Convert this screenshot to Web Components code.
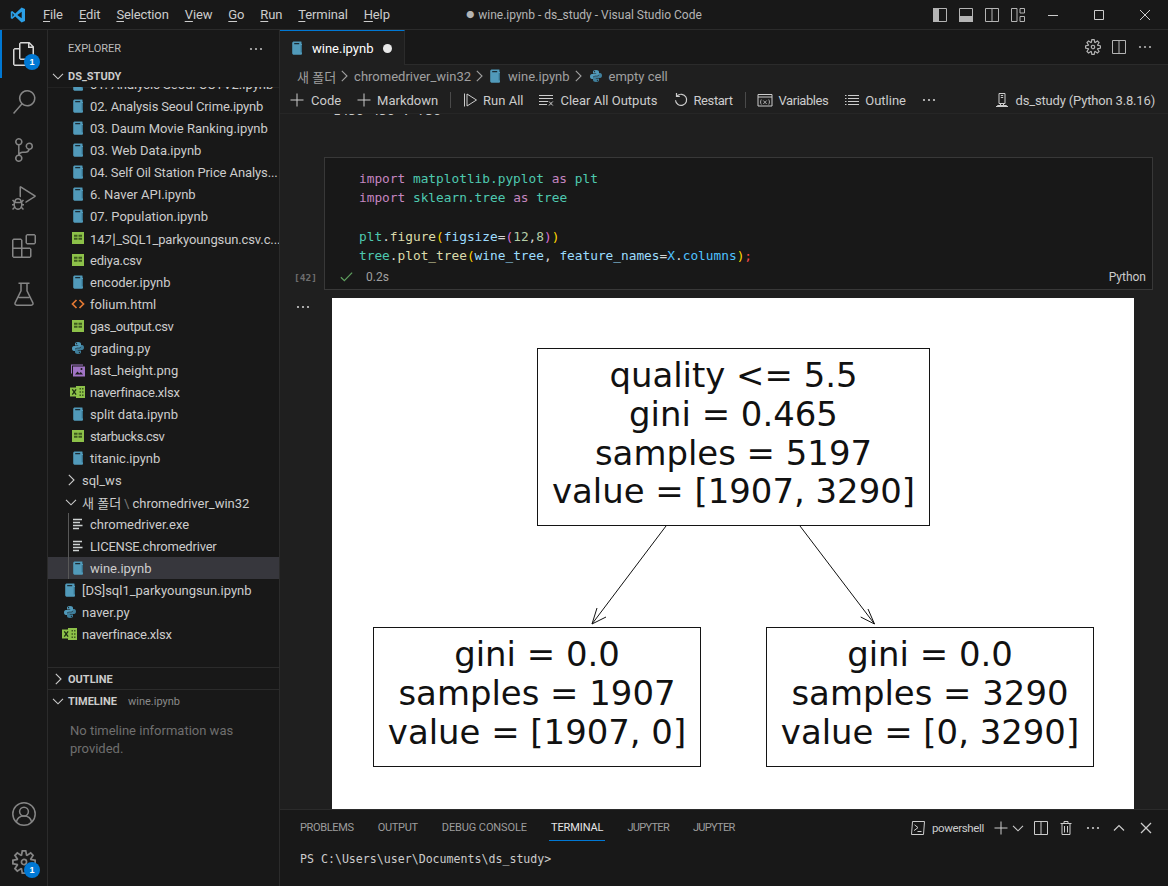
<!DOCTYPE html>
<html lang="en">
<head>
<meta charset="utf-8">
<title>wine.ipynb - ds_study - Visual Studio Code</title>
<style>
  html, body { margin: 0; padding: 0; background: #181818; }
  body { font-family: Roboto, "Noto Sans CJK KR", sans-serif; color: #ccc; }
</style>
</head>
<body>
<vs-window>
  <title-bar slot="top"></title-bar>
  <activity-bar slot="activity"></activity-bar>
  <side-bar slot="side"></side-bar>
  <editor-group slot="main"></editor-group>
</vs-window>

<script>
const MONO = '"DejaVu Sans Mono", "Liberation Mono", monospace';

const ICONS = {
  // activity bar, 24 box
  files: [24, '<path fill="currentColor" d="M17.5 0h-9L7 1.5V6H2.5L1 7.5v15.07L2.5 24h12.07L16 22.57V18h4.7l1.3-1.43V4.5L17.5 0zm0 2.12l2.38 2.38H17.5V2.12zm-3 20.38h-12v-15H7v9.07L8.5 18h6v4.5zm6-6h-12v-15H16V6h4.5v10.5z"/>'],
  search: [24, '<path fill="currentColor" d="M15.25 0a8.25 8.25 0 0 0-6.18 13.72L1 22.88l1.12 1 8.05-9.12A8.251 8.251 0 1 0 15.25.01V0zm0 15a6.75 6.75 0 1 1 0-13.5 6.75 6.75 0 0 1 0 13.5z"/>'],
  scm: [24, '<path fill="currentColor" d="M21.007 8.222A3.738 3.738 0 0 0 15.045 5.2a3.737 3.737 0 0 0 1.156 6.583 2.988 2.988 0 0 1-2.668 1.67h-2.99a4.456 4.456 0 0 0-2.989 1.165V7.4a3.737 3.737 0 1 0-1.494 0v9.117a3.776 3.776 0 1 0 1.816.099 2.99 2.99 0 0 1 2.668-1.667h2.99a4.484 4.484 0 0 0 4.223-3.039 3.736 3.736 0 0 0 3.25-3.687zM4.565 3.738a2.242 2.242 0 1 1 4.484 0 2.242 2.242 0 0 1-4.484 0zm4.484 16.441a2.242 2.242 0 1 1-4.484 0 2.242 2.242 0 0 1 4.484 0zm8.221-9.715a2.242 2.242 0 1 1 0-4.485 2.242 2.242 0 0 1 0 4.485z"/>'],
  debug: [24, '<path fill="currentColor" d="M10.94 13.5l-1.32 1.32a3.73 3.73 0 0 0-7.24 0L1.06 13.5 0 14.56l1.72 1.72-.22.22V18H0v1.5h1.5v.08c.077.489.214.966.41 1.42L0 22.94 1.06 24l1.65-1.65A4.308 4.308 0 0 0 6 24a4.31 4.31 0 0 0 3.29-1.65L10.94 24 12 22.94 10.09 21c.198-.464.336-.951.41-1.45v-.1H12V18h-1.5v-1.5l-.22-.22L12 14.56l-1.06-1.06zM6 13.5a2.25 2.25 0 0 1 2.25 2.25h-4.5A2.25 2.25 0 0 1 6 13.5zm3 6a3.33 3.33 0 0 1-3 3 3.33 3.33 0 0 1-3-3v-2.25h6v2.25zm14.76-9.9v1.26L13.5 17.37v-1.77l8.5-5.37L9 2v9.46a5.07 5.07 0 0 0-1.5-.72V.63L8.64 0l15.12 9.6z"/>'],
  extensions: [24, '<path fill="currentColor" d="M13.5 1.5L15 0h7.5L24 1.5V9l-1.5 1.5H15L13.5 9V1.5zm1.5 0V9h7.5V1.5H15zM0 15V6l1.5-1.5H9L10.5 6v7.5H18l1.5 1.5v7.5L18 24H1.5L0 22.5V15zm9-1.5V6H1.5v7.5H9zM9 15H1.5v7.5H9V15zm1.5 7.5H18V15h-7.5v7.5z"/>'],
  beaker: [24, '<path fill="none" stroke="currentColor" stroke-width="1.5" d="M6.5 1.2h11M9 1.2v7.6L3.2 20.6c-.7 1.5.1 2.6 1.6 2.6h14.4c1.5 0 2.3-1.1 1.6-2.6L15 8.8V1.2M6.6 15.5h10.8"/>'],
  account: [24, '<g fill="none" stroke="currentColor" stroke-width="1.5"><circle cx="12" cy="12" r="11.2"/><circle cx="12" cy="9.6" r="4.4"/><path d="M4.4 20.2c.6-3.7 3.6-6.2 7.6-6.2s7 2.5 7.6 6.2"/></g>'],
  gear: [24, '<path fill="currentColor" d="M19.85 8.75l4.15.83v4.84l-4.15.83 2.35 3.52-3.43 3.43-3.52-2.35-.83 4.15H9.58l-.83-4.15-3.52 2.35-3.43-3.43 2.35-3.52L0 14.42V9.58l4.15-.83L1.8 5.23 5.23 1.8l3.52 2.35L9.58 0h4.84l.83 4.15 3.52-2.35 3.43 3.43-2.35 3.52zm-1.57 5.07l4-.81v-2l-4-.81-.54-1.3 2.29-3.43-1.43-1.43-3.43 2.29-1.3-.54-.81-4h-2l-.81 4-1.3.54-3.43-2.29-1.43 1.43L6.38 8.9l-.54 1.3-4 .81v2l4 .81.54 1.3-2.29 3.43 1.43 1.43 3.43-2.29 1.3.54.81 4h2l.81-4 1.3-.54 3.43 2.29 1.43-1.43-2.29-3.43.54-1.3zm-8.186-4.672A3.43 3.43 0 0 1 12 8.57 3.44 3.44 0 0 1 15.43 12a3.43 3.43 0 1 1-5.336-2.852zm.956 4.274c.281.188.612.288.95.288A1.7 1.7 0 0 0 13.71 12a1.71 1.71 0 1 0-2.66 1.422z"/>'],
  // logo
  logo: [16, '<path fill="#2b9fe6" fill-rule="evenodd" d="M11.6.4L5.3 6.4 2.2 4.1.8 4.8v6.4l1.4.7 3.1-2.3 6.3 6 3.4-1.5V1.9L11.6.4zM11.7 4.7v6.6L7.3 8l4.4-3.3zM2.4 6.1L4.1 8 2.4 9.9V6.1z"/>'],
  // ui, 16 box
  plus: [16, '<path fill="none" stroke="currentColor" d="M8 1.5v13M1.5 8h13"/>'],
  chevronRight: [16, '<path fill="none" stroke="currentColor" stroke-width="1.1" d="M5.8 2.8L11 8l-5.2 5.2"/>'],
  chevronDown: [16, '<path fill="none" stroke="currentColor" stroke-width="1.1" d="M3 5.8l5 5 5-5"/>'],
  chevronUp: [16, '<path fill="none" stroke="currentColor" stroke-width="1.2" d="M3 10.5l5-5 5 5"/>'],
  ellipsis: [16, '<g fill="currentColor"><circle cx="3" cy="8" r="1.1"/><circle cx="8" cy="8" r="1.1"/><circle cx="13" cy="8" r="1.1"/></g>'],
  runAll: [16, '<path fill="none" stroke="currentColor" d="M2.5 1.5v13M5 2l9.5 6L5 14V2z"/>'],
  clearAll: [16, '<path fill="none" stroke="currentColor" d="M1 3.5h14M1 6.5h14M1 9.5h9M1 12.5h8M11 9.5l3.8 4M14.8 9.5l-3.8 4"/>'],
  restart: [16, '<path fill="none" stroke="currentColor" stroke-width="1.2" d="M4.2 3.8A5.6 5.6 0 1 1 2.5 8.3"/><path fill="none" stroke="currentColor" stroke-width="1.2" d="M3.5 1v3.3h3.3"/>'],
  variables: [16, '<path fill="none" stroke="currentColor" d="M1 2.5h14V14H1zM1 5h14"/><path fill="none" stroke="currentColor" stroke-width=".8" d="M4.3 7.5c-1 1.5-1 3.5 0 5M11.700 7.5c1 1.5 1 3.5 0 5M6.3 8.5l3.4 3.5M9.7 8.5L6.3 12"/>'],
  outline: [16, '<path fill="none" stroke="currentColor" d="M4 3.500h11M4 6.500h11M4 9.500h11M4 12.500h11M1 3.500h1.500M1 6.500h1.500M1 9.500h1.500M1 12.500h1.500"/>'],
  kernel: [16, '<path fill="none" stroke="currentColor" d="M5 1.500h6v10H5zM6.800 3.500h2.400M6.800 5.500h2.400M6.500 11.500v2M9.500 11.500v2M2 14.500h12M3.500 14.500v-1h9v1"/>'],
  split: [16, '<path fill="none" stroke="currentColor" d="M1.500 1.500h13v13h-13zM8 1.500v13"/>'],
  layoutLeft: [16, '<path fill="currentColor" d="M1 1h6v14H1z"/><path fill="none" stroke="currentColor" d="M1.500 1.500h13v13h-13z"/>'],
  layoutPanel: [16, '<path fill="currentColor" d="M1 9h14v6H1z"/><path fill="none" stroke="currentColor" d="M1.500 1.500h13v13h-13z"/>'],
  layoutCustom: [16, '<path fill="none" stroke="currentColor" d="M1.500 1.500H7v13H1.500zM10 1.500h4.500V6H10zM10 9.500h4.500v5H10z"/>'],
  minimize: [16, '<path fill="none" stroke="currentColor" d="M3 8.500h10"/>'],
  maximize: [16, '<path fill="none" stroke="currentColor" d="M3.500 3.500h9v9h-9z"/>'],
  close: [16, '<path fill="none" stroke="currentColor" d="M3 3l10 10M13 3L3 13"/>'],
  closeBold: [16, '<path fill="none" stroke="currentColor" stroke-width="1.3" d="M3 3l10 10M13 3L3 13"/>'],
  trash: [16, '<path fill="none" stroke="currentColor" d="M2.500 3.500h11M6 3.500V1.500h4v2M4 3.500v11h8v-11M6.500 6v6.500M9.500 6v6.500"/>'],
  terminal: [16, '<path fill="none" stroke="currentColor" d="M2.500 1.500h12l-1 13h-12z"/><path fill="none" stroke="currentColor" d="M4.500 4.800L8 7.600l-4 3M7.500 11.500h4"/>'],
  check: [16, '<path fill="none" stroke="#5f9f5f" stroke-width="1.3" d="M2 8.800l3.700 3.700L14 3.800"/>'],
  // file icons
  notebook: [16, '<path fill="#519aba" d="M5 1.500h6.500c1 0 1.500.6 1.500 1.500v10.300c0 1-.5 1.500-1.500 1.500H5c-1 0-1.800-.6-1.800-1.500V3c0-.9.8-1.500 1.800-1.500z"/><path fill="#1b2d36" d="M5.200 3h5v1.300h-5zM12 2.500h1v1h-1z"/><path fill="#35708a" d="M11.700 5H13v7.500h-1.300z"/>'],
  csv: [16, '<path fill="#8dc149" d="M2 2h12v12H2z"/><path fill="#3d5a1e" d="M4 4.800h3.500v2H4zM8.500 4.800H12v2H8.500zM4 7.800h3.500v2H4zM8.500 7.800H12v2H8.500z"/>'],
  html: [16, '<path fill="none" stroke="#e37933" stroke-width="1.7" d="M6.500 4L2.500 8l4 4M9.500 4l4 4-4 4"/>'],
  python: [16, '<path fill="#519aba" d="M8 2C5.800 2 5 2.900 5 4v1.500h3.200V6H3.900C2.700 6 2 7 2 8.500S2.700 11 3.900 11H5V9.600C5 8.500 5.900 7.700 7 7.700h2.300c.9 0 1.700-.8 1.700-1.700V4c0-1.100-1-2-3-2zM6.600 3.100a.6.600 0 1 1 0 1.200.6.600 0 0 1 0-1.200z"/><path fill="#3f7f9c" d="M8 14c2.200 0 3-.9 3-2v-1.500H7.800V10h4.300c1.200 0 1.900-1 1.900-2.500S13.300 5 12.100 5H11v1.400c0 1.100-.9 1.900-2 1.900H6.700C5.800 8.300 5 9.100 5 10v2c0 1.100 1 2 3 2zm1.400-1.100a.6.600 0 1 1 0-1.200.6.600 0 0 1 0 1.200z"/>'],
  image: [16, '<path fill="#a074c4" d="M1 2.500h12v1H2v8H1z"/><path fill="#a074c4" d="M3 4.500h12v10H3z"/><path fill="#1b1b1b" d="M5 12.500l2.500-3 1.800 2 1.500-1.500 2.200 2.500z"/><circle cx="11.500" cy="7" r="1" fill="#1b1b1b"/>'],
  xlsx: [16, '<path fill="#8dc149" d="M6 2h9v12H6z"/><path fill="#3d5a1e" d="M9.500 4H11v1.500H9.500zM12 4h1.500v1.500H12zM9.500 7.300H11v1.500H9.500zM12 7.300h1.500v1.500H12zM9.500 10.500H11V12H9.500zM12 10.500h1.500V12H12z"/><path fill="#8dc149" d="M0 3.500h8.500v9H0z"/><path fill="none" stroke="#1b2d12" stroke-width="1.3" d="M2.300 5.300l3.800 5.400M6.100 5.300l-3.800 5.400"/>'],
  lines: [16, '<path fill="none" stroke="#cfd3d3" stroke-width="1.3" d="M3 3.500h9M3 6.500h7M3 9.500h9.500M3 12.500h6"/>']
};

class VIcon extends HTMLElement {
  connectedCallback() {
    const [box, body] = ICONS[this.getAttribute('name')];
    const size = this.getAttribute('size') || 16;
    this.attachShadow({ mode: 'open' });
    this.shadowRoot.innerHTML = `
      <style>
        :host { display: inline-flex; flex: none; width: ${size}px; height: ${size}px; }
        svg { display: block; width: 100%; height: 100%; }
      </style>
      <svg viewBox="0 0 ${box} ${box}" aria-hidden="true">${body}</svg>`;
  }
}
customElements.define('v-icon', VIcon);

class VsWindow extends HTMLElement {
  connectedCallback() {
    this.attachShadow({ mode: 'open' });
    this.shadowRoot.innerHTML = `
      <style>
        :host {
          display: grid;
          width: 1168px;
          height: 886px;
          overflow: hidden;
          background: #181818;
          grid-template-columns: 48px 232px 1fr;
          grid-template-rows: 30px 1fr;
          font: 13px Roboto, "Noto Sans CJK KR", sans-serif;
          color: #ccc;
        }
        .top { grid-column: 1 / -1; display: grid; min-width: 0; }
        .col { display: grid; min-width: 0; min-height: 0; }
      </style>
      <div class="top"><slot name="top"></slot></div>
      <div class="col"><slot name="activity"></slot></div>
      <div class="col"><slot name="side"></slot></div>
      <div class="col"><slot name="main"></slot></div>`;
  }
}
customElements.define('vs-window', VsWindow);

class TitleBar extends HTMLElement {
  connectedCallback() {
    const menus = ['File', 'Edit', 'Selection', 'View', 'Go', 'Run', 'Terminal', 'Help'];
    this.attachShadow({ mode: 'open' });
    this.shadowRoot.innerHTML = `
      <style>
        :host {
          display: grid;
          grid-template-columns: 1fr auto 1fr;
          align-items: center;
          height: 30px;
          box-sizing: border-box;
          border-bottom: 1px solid #2b2b2b;
          background: #181818;
        }
        .left { display: flex; align-items: center; padding-left: 10px; }
        .menus { display: flex; gap: 16px; margin-left: 17px; color: #ccc; letter-spacing: -.13px; }
        u { text-underline-offset: 2px; }
        .title { font-size: 12px; color: #b4b4b4; }
        .title small { font-size: 8px; margin-right: 4px; vertical-align: 1px; }
        .right { display: flex; justify-content: flex-end; align-items: center; color: #b4b4b4; }
        .layout { display: flex; gap: 10px; margin-right: 4px; }
        .win { width: 46px; display: flex; justify-content: center; color: #ccc; }
      </style>
      <div class="left">
        <v-icon name="logo"></v-icon>
        <div class="menus">${menus.map(m => `<span><u>${m[0]}</u>${m.slice(1)}</span>`).join('')}</div>
      </div>
      <div class="title"><small>●</small>wine.ipynb - ds_study - Visual Studio Code</div>
      <div class="right">
        <div class="layout">
          <v-icon name="layoutLeft"></v-icon>
          <v-icon name="layoutPanel"></v-icon>
          <v-icon name="split"></v-icon>
          <v-icon name="layoutCustom"></v-icon>
        </div>
        <div class="win"><v-icon name="minimize"></v-icon></div>
        <div class="win"><v-icon name="maximize"></v-icon></div>
        <div class="win"><v-icon name="close"></v-icon></div>
      </div>`;
  }
}
customElements.define('title-bar', TitleBar);

class ActivityItem extends HTMLElement {
  connectedCallback() {
    const active = this.hasAttribute('active');
    const badge = this.getAttribute('badge');
    this.attachShadow({ mode: 'open' });
    this.shadowRoot.innerHTML = `
      <style>
        :host {
          display: flex;
          position: relative;
          align-items: center;
          justify-content: center;
          width: 47px;
          height: 48px;
          color: ${active ? '#d7d7d7' : '#858585'};
          box-sizing: border-box;
          ${active ? 'border-left: 2px solid #0078d4; padding-right: 2px;' : ''}
        }
        .badge {
          position: absolute;
          left: ${active ? 22 : 24}px;
          top: 24px;
          width: 16px;
          height: 16px;
          border-radius: 50%;
          background: #0078d4;
          color: #fff;
          font: 700 9px/16px "Liberation Sans", sans-serif;
          text-align: center;
        }
      </style>
      <v-icon name="${this.getAttribute('icon')}" size="24"></v-icon>
      ${badge ? `<span class="badge">${badge}</span>` : ''}`;
  }
}
customElements.define('activity-item', ActivityItem);

class ActivityBar extends HTMLElement {
  connectedCallback() {
    this.attachShadow({ mode: 'open' });
    this.shadowRoot.innerHTML = `
      <style>
        :host {
          display: flex;
          flex-direction: column;
          justify-content: space-between;
          width: 48px;
          box-sizing: border-box;
          border-right: 1px solid #2b2b2b;
          background: #181818;
        }
      </style>
      <div>
        <activity-item icon="files" badge="1" active></activity-item>
        <activity-item icon="search"></activity-item>
        <activity-item icon="scm"></activity-item>
        <activity-item icon="debug"></activity-item>
        <activity-item icon="extensions"></activity-item>
        <activity-item icon="beaker"></activity-item>
      </div>
      <div>
        <activity-item icon="account"></activity-item>
        <activity-item icon="gear" badge="1"></activity-item>
      </div>`;
  }
}
customElements.define('activity-bar', ActivityBar);

class FileRow extends HTMLElement {
  connectedCallback() {
    const depth = +(this.getAttribute('depth') || 1);
    const icon = this.getAttribute('icon');
    const selected = this.hasAttribute('selected');
    const guide = this.hasAttribute('guide');
    this.attachShadow({ mode: 'open' });
    this.shadowRoot.innerHTML = `
      <style>
        :host {
          display: flex;
          align-items: center;
          position: relative;
          height: 22px;
          padding-left: ${14 + (depth - 1) * 8}px;
          white-space: nowrap;
          overflow: hidden;
          color: #ccc;
          font-size: 13px;
          ${selected ? 'background: #37373d;' : ''}
        }
        .txt { margin-left: 4px; }
        .folder { margin-left: 1px; margin-right: -1px; color: #ccc; }
        .guide { position: absolute; left: 20px; top: 0; bottom: 0; width: 1px; background: #585858; }
      </style>
      ${guide ? '<span class="guide"></span>' : ''}
      <v-icon name="${icon}" ${icon.startsWith('chevron') ? 'class="folder"' : ''}></v-icon>
      <span class="txt"><slot></slot></span>`;
  }
}
customElements.define('file-row', FileRow);

class PaneHeader extends HTMLElement {
  connectedCallback() {
    const open = this.hasAttribute('open');
    const line = this.hasAttribute('line');
    this.attachShadow({ mode: 'open' });
    this.shadowRoot.innerHTML = `
      <style>
        :host {
          display: flex;
          align-items: center;
          height: 22px;
          box-sizing: border-box;
          padding-left: 2px;
          font-size: 11px;
          font-weight: 700;
          color: #ccc;
          ${line ? 'border-top: 1px solid #2b2b2b; padding-top: 1px;' : ''}
          flex: none;
        }
        v-icon { margin-left: 0; margin-right: 2px; }
        ::slotted(small) { font-size: 11px; font-weight: 400; color: #8a8a8a; margin-left: 11px; }
      </style>
      <v-icon name="${open ? 'chevronDown' : 'chevronRight'}"></v-icon>
      <slot></slot>`;
  }
}
customElements.define('pane-header', PaneHeader);

class SideBar extends HTMLElement {
  connectedCallback() {
    const rows = [
      [2, 'notebook', '01. Analysis Seoul CCTV2.ipynb'],
      [2, 'notebook', '02. Analysis Seoul Crime.ipynb', -.14],
      [2, 'notebook', '03. Daum Movie Ranking.ipynb'],
      [2, 'notebook', '03. Web Data.ipynb'],
      [2, 'notebook', '04. Self Oil Station Price Analys...', -.1],
      [2, 'notebook', '6. Naver API.ipynb'],
      [2, 'notebook', '07. Population.ipynb'],
      [2, 'csv', '14기_SQL1_parkyoungsun.csv.c...', -.12],
      [2, 'csv', 'ediya.csv', -.2],
      [2, 'notebook', 'encoder.ipynb'],
      [2, 'html', 'folium.html'],
      [2, 'csv', 'gas_output.csv', -.3],
      [2, 'python', 'grading.py'],
      [2, 'image', 'last_height.png'],
      [2, 'xlsx', 'naverfinace.xlsx', -.25],
      [2, 'notebook', 'split data.ipynb'],
      [2, 'csv', 'starbucks.csv', -.45],
      [2, 'notebook', 'titanic.ipynb'],
      [1, 'chevronRight', 'sql_ws'],
      [1, 'chevronDown', '새 폴더<span style="color:#777;margin:0 3px">\\</span>chromedriver_win32'],
      [2, 'lines', 'chromedriver.exe', 0, 'guide'],
      [2, 'lines', 'LICENSE.chromedriver', -.2, 'guide'],
      [2, 'notebook', 'wine.ipynb', 0, 'guide selected'],
      [1, 'notebook', '[DS]sql1_parkyoungsun.ipynb'],
      [1, 'python', 'naver.py'],
      [1, 'xlsx', 'naverfinace.xlsx', -.25]
    ];
    this.attachShadow({ mode: 'open' });
    this.shadowRoot.innerHTML = `
      <style>
        :host {
          display: flex;
          flex-direction: column;
          width: 232px;
          box-sizing: border-box;
          border-right: 1px solid #2b2b2b;
          background: #181818;
          min-height: 0;
          overflow: hidden;
        }
        .title {
          display: flex;
          justify-content: space-between;
          align-items: center;
          height: 35px;
          flex: none;
          box-sizing: border-box;
          padding: 2px 15px 0 20px;
          font-size: 11px;
          color: #bbb;
        }
        .tree { flex: none; height: 580px; overflow: hidden; box-shadow: inset 0 1px 0 #222; }
        .rows { margin-top: -14px; }
        .empty { padding: 11px 20px 0 22px; line-height: 18px; color: #6f6f6f; }
      </style>
      <div class="title"><span>EXPLORER</span><v-icon name="ellipsis"></v-icon></div>
      <pane-header open>DS_STUDY</pane-header>
      <div class="tree"><div class="rows">
        ${rows.map(([d, i, t, ls, extra]) => `<file-row depth="${d}" icon="${i}" ${extra || ''} ${ls ? `style="letter-spacing:${ls}px"` : ''}>${t}</file-row>`).join('')}
      </div></div>
      <pane-header line>OUTLINE</pane-header>
      <pane-header open line>TIMELINE<small>wine.ipynb</small></pane-header>
      <div class="empty">No timeline information was provided.</div>`;
  }
}
customElements.define('side-bar', SideBar);

class EditorGroup extends HTMLElement {
  connectedCallback() {
    this.attachShadow({ mode: 'open' });
    this.shadowRoot.innerHTML = `
      <style>
        :host {
          display: flex;
          flex-direction: column;
          min-width: 0;
          min-height: 0;
          overflow: hidden;
          background: #1f1f1f;
        }
        .tabs {
          display: flex;
          justify-content: space-between;
          height: 35px;
          flex: none;
          box-sizing: border-box;
          background: #181818;
          border-bottom: 1px solid #2b2b2b;
        }
        .tab {
          display: flex;
          align-items: center;
          width: 125px;
          height: 35px;
          box-sizing: border-box;
          padding-left: 9px;
          background: #1f1f1f;
          border-top: 1px solid #0078d4;
          border-right: 1px solid #2b2b2b;
          color: #fff;
        }
        .tab span { margin-left: 7px; }
        .tab i { width: 9px; height: 9px; margin-left: 10px; border-radius: 50%; background: #e8e8e8; }
        .actions { display: flex; align-items: center; gap: 10px; padding-right: 15px; color: #b4b4b4; }
        .crumbs {
          display: flex;
          align-items: center;
          height: 22px;
          flex: none;
          padding-left: 17px;
          color: #a0a0a0;
          white-space: nowrap;
        }
        .crumbs .file { margin: 0 5px 0 0; }
        .crumbs .py { margin: 0 5px 0 2px; }
      </style>
      <div class="tabs">
        <div class="tab">
          <v-icon name="notebook"></v-icon><span>wine.ipynb</span><i></i>
        </div>
        <div class="actions">
          <v-icon name="gear"></v-icon>
          <v-icon name="split"></v-icon>
          <v-icon name="ellipsis"></v-icon>
        </div>
      </div>
      <div class="crumbs">
        <span>새 폴더</span>
        <v-icon name="chevronRight" style="margin-right:2px"></v-icon>
        <span>chromedriver_win32</span>
        <v-icon name="chevronRight"></v-icon>
        <v-icon name="notebook" class="file"></v-icon>
        <span>wine.ipynb</span>
        <v-icon name="chevronRight"></v-icon>
        <v-icon name="python" class="py"></v-icon>
        <span>empty cell</span>
      </div>
      <nb-toolbar></nb-toolbar>
      <nb-view></nb-view>
      <bottom-panel></bottom-panel>`;
  }
}
customElements.define('editor-group', EditorGroup);

class ToolItem extends HTMLElement {
  connectedCallback() {
    this.attachShadow({ mode: 'open' });
    this.shadowRoot.innerHTML = `
      <style>
        :host { display: inline-flex; align-items: center; gap: var(--gap, 6px); color: #ccc; white-space: nowrap; }
      </style>
      <v-icon name="${this.getAttribute('icon')}"></v-icon><slot></slot>`;
  }
}
customElements.define('tool-item', ToolItem);

class NbToolbar extends HTMLElement {
  connectedCallback() {
    this.attachShadow({ mode: 'open' });
    this.shadowRoot.innerHTML = `
      <style>
        :host {
          display: flex;
          align-items: center;
          gap: 15px;
          height: 26px;
          flex: none;
          padding: 0 13px 0 9px;
          box-sizing: border-box;
          box-shadow: 0 1px 0 #262626;
          position: relative;
          z-index: 1;
          background: #1f1f1f;
        }
        .sep { width: 1px; height: 16px; background: #4a4a4a; margin: 0 -5px 0 -3px; }
        .gap { flex: 1; }
      </style>
      <tool-item icon="plus">Code</tool-item>
      <tool-item icon="plus" style="--gap:5px">Markdown</tool-item>
      <span class="sep"></span>
      <tool-item icon="runAll" style="margin-left:1px;--gap:5px">Run All</tool-item>
      <tool-item icon="clearAll">Clear All Outputs</tool-item>
      <tool-item icon="restart" style="--gap:5px;letter-spacing:-.42px">Restart</tool-item>
      <span class="sep" style="margin-right:-4px"></span>
      <tool-item icon="variables" style="letter-spacing:-.45px">Variables</tool-item>
      <tool-item icon="outline" style="--gap:5px;margin-left:1px">Outline</tool-item>
      <v-icon name="ellipsis"></v-icon>
      <span class="gap"></span>
      <tool-item icon="kernel" style="letter-spacing:-.17px">ds_study (Python 3.8.16)</tool-item>`;
  }
}
customElements.define('nb-toolbar', NbToolbar);

class CodeCell extends HTMLElement {
  connectedCallback() {
    this.attachShadow({ mode: 'open' });
    this.shadowRoot.innerHTML = `
      <style>
        :host {
          display: flex;
          align-items: flex-end;
        }
        .count {
          width: 44px;
          flex: none;
          box-sizing: border-box;
          padding: 0 7px 5px 0;
          text-align: right;
          font: 700 9.5px/14px ${MONO};
          color: #6e6e6e;
        }
        .box {
          flex: 1;
          margin-right: 15px;
          border: 1px solid #383838;
          background: #181818;
          height: 133px;
          box-sizing: border-box;
        }
        pre {
          margin: 0;
          padding: 11px 0 0 34px;
          height: 106px;
          box-sizing: border-box;
          font: 12.8px/19.2px ${MONO};
          color: #d4d4d4;
        }
        .k { color: #c586c0; } .t { color: #4ec9b0; } .f { color: #dcdcaa; } .v { color: #9cdcfe; }
        .n { color: #b5cea8; } .c { color: #4fc1ff; } .y { color: #ffd700; } .m { color: #da70d6; } .r { color: #f44747; }
        .foot { display: flex; align-items: center; height: 25px; padding: 0 6px 0 14px; font-size: 12px; color: #a0a0a0; }
        .foot span { margin-left: 12px; }
        .foot b { margin-left: auto; font-weight: 400; color: #ccc; }
      </style>
      <div class="count">[42]</div>
      <div class="box">
<pre><span class="k">import</span> <span class="t">matplotlib.pyplot</span> <span class="k">as</span> <span class="t">plt</span>
<span class="k">import</span> <span class="t">sklearn.tree</span> <span class="k">as</span> <span class="t">tree</span>

<span class="t">plt</span>.<span class="f">figure</span><span class="y">(</span><span class="v">figsize</span>=<span class="m">(</span><span class="n">12</span>,<span class="n">8</span><span class="m">)</span><span class="y">)</span>
<span class="t">tree</span>.<span class="f">plot_tree</span><span class="y">(</span><span class="v">wine_tree</span>, <span class="v">feature_names</span>=<span class="c">X</span>.<span class="c">columns</span><span class="y">)</span><span class="r">;</span></pre>
        <div class="foot"><v-icon name="check" size="15"></v-icon><span>0.2s</span><b>Python</b></div>
      </div>`;
  }
}
customElements.define('code-cell', CodeCell);

class TreeNode extends HTMLElement {
  connectedCallback() {
    this.attachShadow({ mode: 'open' });
    this.shadowRoot.innerHTML = `
      <style>
        :host {
          position: absolute;
          display: flex;
          flex-direction: column;
          justify-content: center;
          box-sizing: border-box;
          padding-bottom: 5px;
          border: 1px solid #141414;
          background: #fff;
          color: #111;
          text-align: center;
          white-space: nowrap;
          font: 33.9px/38.7px "DejaVu Sans", sans-serif;
        }
      </style>
      <slot></slot>`;
  }
}
customElements.define('tree-node', TreeNode);

class TreePlot extends HTMLElement {
  connectedCallback() {
    this.attachShadow({ mode: 'open' });
    this.shadowRoot.innerHTML = `
      <style>
        :host {
          display: block;
          position: relative;
          width: 802px;
          height: 540px;
          background: #fff;
          flex: none;
        }
        svg { position: absolute; left: 0; top: 0; }
      </style>
      <svg width="802" height="540" fill="none" stroke="#111" stroke-width="1">
        <path d="M334 228L260 326M274 319L260 326L265 310"/>
        <path d="M468 228L542.5 326M528.7 319L542.5 326L536 311"/>
      </svg>
      <slot></slot>`;
  }
}
customElements.define('tree-plot', TreePlot);

class NbView extends HTMLElement {
  connectedCallback() {
    this.attachShadow({ mode: 'open' });
    this.shadowRoot.innerHTML = `
      <style>
        :host {
          display: block;
          flex: 1;
          min-height: 0;
          overflow: hidden;
          background: #1f1f1f;
        }
        .cut {
          height: 2px;
          overflow: hidden;
          padding-left: 53px;
          font: 12.8px/14px ${MONO};
          color: #ccc;
          margin-bottom: 42px;
        }
        .cut div { margin-top: -9px; white-space: pre; }
        .out { display: flex; margin-top: 8px; }
        .dots { width: 52px; flex: none; box-sizing: border-box; padding: 1px 0 0 15px; color: #ccc; }
      </style>
      <div class="cut"><div>1456 456 : 736</div></div>
      <code-cell></code-cell>
      <div class="out">
        <div class="dots"><v-icon name="ellipsis" size="16"></v-icon></div>
        <tree-plot>
          <tree-node style="left:205px;top:50px;width:393px;height:178px">
            <div>quality &lt;= 5.5</div>
            <div>gini = 0.465</div>
            <div>samples = 5197</div>
            <div>value = [1907, 3290]</div>
          </tree-node>
          <tree-node style="left:41px;top:329px;width:328px;height:140px">
            <div>gini = 0.0</div>
            <div>samples = 1907</div>
            <div>value = [1907, 0]</div>
          </tree-node>
          <tree-node style="left:434px;top:329px;width:328px;height:140px">
            <div>gini = 0.0</div>
            <div>samples = 3290</div>
            <div>value = [0, 3290]</div>
          </tree-node>
        </tree-plot>
      </div>`;
  }
}
customElements.define('nb-view', NbView);

class BottomPanel extends HTMLElement {
  connectedCallback() {
    const tabs = [['PROBLEMS', -.35], ['OUTPUT', -.3], ['DEBUG CONSOLE', -.1], ['TERMINAL', -.1], ['JUPYTER', -.7], ['JUPYTER', -.7]];
    this.attachShadow({ mode: 'open' });
    this.shadowRoot.innerHTML = `
      <style>
        :host {
          display: block;
          height: 77px;
          flex: none;
          box-sizing: border-box;
          border-top: 1px solid #2b2b2b;
          background: #181818;
          position: relative;
          z-index: 1;
        }
        .bar { display: flex; align-items: flex-start; height: 35px; padding: 0 14px 0 20px; }
        .tabs { display: flex; gap: 24px; font-size: 11px; color: #9d9d9d; }
        .tabs span { height: 30px; line-height: 36px; }
        .tabs .on { color: #e7e7e7; border-bottom: 1px solid #0078d4; padding: 0 2px; margin: 0 -2px; }
        .act { display: flex; align-items: center; margin-left: auto; height: 36px; color: #ccc; }
        .shell { font-size: 11.5px; letter-spacing: -.35px; margin: 0 9px 0 6px; }
        .act v-icon.a { margin-left: 1px; }
        .act v-icon.b { margin-left: 7px; }
        .act v-icon.c { margin-left: 9px; }
        .act v-icon.d { margin-left: 11px; }
        .act v-icon.e { margin-left: 10px; }
        .prompt { padding: 6px 0 0 20px; font: 11.6px/17px ${MONO}; color: #ccc; }
      </style>
      <div class="bar">
        <div class="tabs">${tabs.map(([t, ls]) => `<span${t === 'TERMINAL' ? ' class="on"' : ''} style="letter-spacing:${ls}px">${t}</span>`).join('')}</div>
        <div class="act">
          <v-icon name="terminal"></v-icon><span class="shell">powershell</span>
          <v-icon name="plus"></v-icon><v-icon name="chevronDown" class="a"></v-icon>
          <v-icon name="split" class="b"></v-icon>
          <v-icon name="trash" class="c"></v-icon>
          <v-icon name="ellipsis" class="d"></v-icon>
          <v-icon name="chevronUp" class="e"></v-icon>
          <v-icon name="closeBold" class="d"></v-icon>
        </div>
      </div>
      <div class="prompt">PS C:\\Users\\user\\Documents\\ds_study&gt;</div>`;
  }
}
customElements.define('bottom-panel', BottomPanel);
</script>
</body>
</html>
